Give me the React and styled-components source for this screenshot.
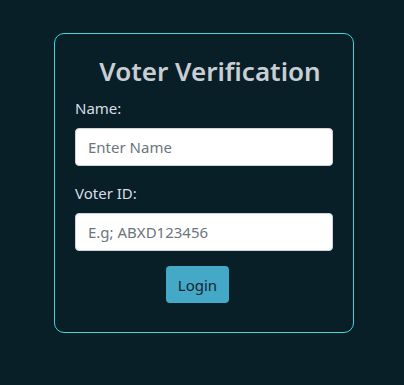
import React from "react";
import styled, {createGlobalStyle} from "styled-components";

const GlobalStyle = createGlobalStyle`
  html, body {
    margin: 0;
    padding: 0;
    background: #081f28;
    font-family: "Noto Sans", "Open Sans", sans-serif;
  }
`

const Page = styled.div`
  min-height: 385px;
  padding: 33px 0 0 54px;
  box-sizing: border-box;
`

const Card = styled.form`
  width: 300px;
  height: 300px;
  box-sizing: border-box;
  border: 1px solid #3fd6d6;
  border-radius: 10px;
  padding: 17px 20px;
  display: flex;
  flex-direction: column;
`

const Title = styled.h2`
  margin: 0 0 5px;
  padding-left: 12px;
  text-align: center;
  font-size: 26px;
  font-weight: 600;
  line-height: 40px;
  color: #c9ced3;
`

const Field = styled.div`
  display: flex;
  flex-direction: column;
  margin-bottom: ${p => p.$gap || 16}px;
`

const Label = styled.label`
  font-size: 15px;
  line-height: 24px;
  color: #d8dee3;
  margin-bottom: 8px;
`

const Input = styled.input`
  height: 38px;
  box-sizing: border-box;
  border: 1px solid #ced4da;
  border-radius: 4px;
  padding: 6px 12px;
  font-family: inherit;
  font-size: 15px;
  color: #212529;
  background: #fff;
  &::placeholder {
    color: #6c757d;
  }
`

const Button = styled.button`
  align-self: center;
  margin-right: 13px;
  height: 37px;
  padding: 0 12px;
  border: none;
  border-radius: 4px;
  background: #44a9c6;
  color: #1c2230;
  font-family: inherit;
  font-size: 15px;
  cursor: pointer;
`

export default function App() {
    return <>
        <GlobalStyle/>
        <Page>
            <Card onSubmit={e => e.preventDefault()}>
                <Title>Voter Verification</Title>
                <Field $gap={15}>
                    <Label>Name:</Label>
                    <Input placeholder="Enter Name"/>
                </Field>
                <Field $gap={15}>
                    <Label>Voter ID:</Label>
                    <Input placeholder="E.g; ABXD123456"/>
                </Field>
                <Button type="submit">Login</Button>
            </Card>
        </Page>
    </>
}
